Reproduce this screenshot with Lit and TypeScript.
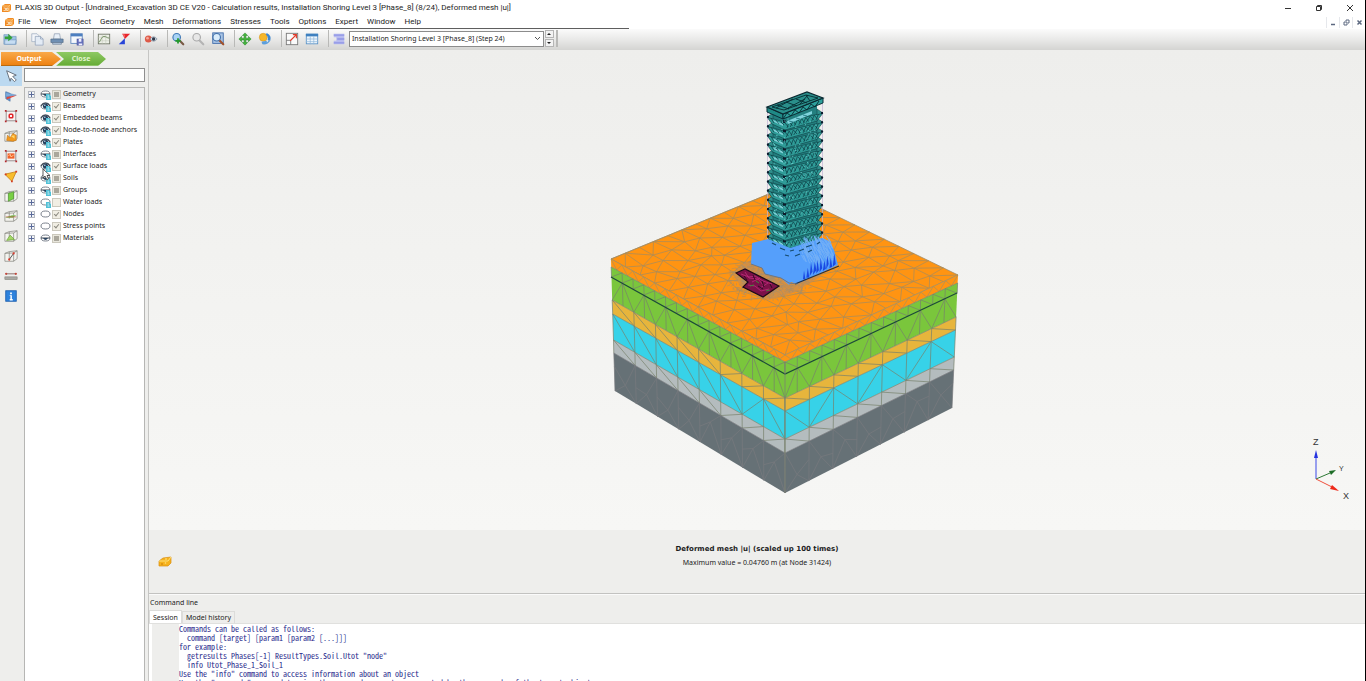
import { LitElement, html, css, svg, TemplateResult } from "lit";
import { customElement, property, state } from "lit/decorators.js";
import { classMap } from "lit/directives/class-map.js";

type Pt = [number, number];

const pts = (list: Pt[]) => list.map((p) => p[0].toFixed(1) + "," + p[1].toFixed(1)).join(" ");
const seg = (a: Pt, b: Pt) => `M${a[0].toFixed(1)} ${a[1].toFixed(1)}L${b[0].toFixed(1)} ${b[1].toFixed(1)}`;
const mix = (a: Pt, b: Pt, t: number): Pt => [a[0] + (b[0] - a[0]) * t, a[1] + (b[1] - a[1]) * t];

function random(seed: number) {
  let s = seed;
  return () => {
    s = (s * 16807) % 2147483647;
    return s / 2147483647;
  };
}

/* ---------- icons ---------- */

const folder = svg`<path d="M1 3h6l1 2h7v9H1z" fill="#9fc3e6" stroke="#6b90b8" stroke-width=".7"/><path d="M2 9h13l-1 5H2z" fill="#c6ddf3" stroke="#6b90b8" stroke-width=".6"/><path d="M2 5h4V2l5 4.500-5 4V8H2z" fill="#35a13c"/>`;
const sheets = svg`<path d="M2 2h6l2 2v7H2z" fill="#f3f6fa" stroke="#9aa9bd" stroke-width=".8"/><path d="M6 5h6l3 3v7H6z" fill="#e3ebf5" stroke="#8b9cb4" stroke-width=".8"/><path d="M12 5v3h3" fill="none" stroke="#8b9cb4" stroke-width=".8"/>`;
const printer = svg`<path d="M4 8l1-6h6l1 6z" fill="#e9f0f8" stroke="#7e8ea5" stroke-width=".7"/><path d="M1 8h14v4H1z" fill="#6f8fb3" stroke="#4e6682" stroke-width=".7"/><path d="M3 12h10v2H3z" fill="#b7c9de" stroke="#4e6682" stroke-width=".6"/>`;
const saveView = svg`<rect x="1" y="2" width="13" height="11" fill="#f5f8fc" stroke="#5f87bd"/><path d="M1 2h13v3H1z" fill="#4d7fc0"/><rect x="8" y="8" width="7" height="7" fill="#6873bd" stroke="#454f96" stroke-width=".6"/><path d="M10 8h3v3h-3zM10 13h4v2h-4z" fill="#eef"/>`;
const curve = svg`<rect x="1.500" y="2.500" width="13" height="11" fill="#eef1e8" stroke="#6f7566"/><path d="M1 6h13M1 10h13M6 3v11M10 3v11" stroke="#b9bfb0" stroke-width=".5"/><path d="M2 12c2-1 3-7 6-7s3 2 6 2" fill="none" stroke="#6f8d5e"/>`;
const crossSection = svg`<path d="M6 2h9L9 8z" fill="#e8262c"/><path d="M9 7v7H2z" fill="#2845d8"/><path d="M6 2l3 1v4z" fill="#f46a6a"/>`;
const hideEye = svg`<circle cx="5" cy="8" r="4" fill="#dd5a48"/><circle cx="4" cy="7" r="1.500" fill="#f6a79a"/><path d="M7 8q4-5 8 0q-4 5-8 0z" fill="#e5edf5" stroke="#64748a" stroke-width=".7"/><circle cx="11" cy="8" r="2" fill="#303b4c"/>`;
const magnify = (lens: string, ring: string, handle: string) =>
  svg`<path d="M9.500 9.500l4.500 4.500" stroke=${handle} stroke-width="2.500" stroke-linecap="round"/><circle cx="6.500" cy="6" r="4.300" fill=${lens} stroke=${ring} stroke-width="1.300"/>`;
const zoomIn = svg`${magnify("#a9d3f5", "#3f78b5", "#7a5a46")}<path d="M5 10h6M8 7v6" stroke="#239a2b" stroke-width="2"/>`;
const zoomOut = magnify("#e7e7e7", "#a9a9a9", "#b4b4b4");
const zoomFit = svg`<rect x="2" y="1" width="12" height="12" fill="#a9c4e5" stroke="#3e6aa8"/>${magnify("#d9ecfb", "#3f6fa9", "#a0522d")}`;
const move = svg`<path d="M8 1l3 3H9v3h3V5l3 3-3 3V9H9v3h2l-3 3-3-3h2V9H4v2L1 8l3-3v2h3V4H5z" fill="#45b53c" stroke="#27872a" stroke-width=".6"/>`;
const rotate = svg`<circle cx="6" cy="6" r="4.500" fill="#f7b729" stroke="#d3921a" stroke-width=".6"/><path d="M10 1q6 3 4 9l-3-1q1-4-2-6z" fill="#3f87cf"/><path d="M14 10q-3 5-9 4l-1-3 6-1v2q2-1 2-3z" fill="#5b9edc"/>`;
const scale = svg`<rect x="1.500" y="1.500" width="13" height="13" fill="#fafafa" stroke="#777"/><path d="M1.500 9.500h5v5" fill="none" stroke="#777"/><path d="M6 10l7-7M9 3h4v4" fill="none" stroke="#e13a2a" stroke-width="1.300"/>`;
const grid = svg`<rect x="1.500" y="2.500" width="13" height="11" fill="#eef6fc" stroke="#5b92c6"/><path d="M1 2h14v3H1z" fill="#3f80c0"/><path d="M1 8h14M1 11h14M6 5v9M10 5v9" stroke="#8fb6da" stroke-width=".8"/>`;
const levels = svg`<path d="M2 2h12v12H2v-4h3V6H2z" fill="#b7bbf0"/><path d="M2 3.500h12M6 8h8M2 12.500h12" stroke="#9095e4" stroke-width="1.500"/>`;

const arrow = svg`<path d="M3 2l11 5-4 1.500 4 4-2 2-4-4L7 14z" fill="#fff" stroke="#5a6470" stroke-width="1"/>`;
const plane = svg`<path d="M2 3l5 2v9l-5-3z" fill="#5f97d3" stroke="#41699a" stroke-width=".6"/><path d="M2 4l12 3-12 2z" fill="#7fadde" stroke="#4f80b8" stroke-width=".5"/><path d="M3 12l12-5-12 2z" fill="#e2473b"/>`;
const frame = svg`<rect x="2.500" y="2.500" width="11" height="11" fill="#f7f3f3" stroke="#8f8484"/><path d="M1 1h2v2H1zM13 1h2v2h-2zM1 13h2v2H1zM13 13h2v2h-2z" fill="#b3282c"/>`;
const nodeFrame = svg`${frame}<rect x="6" y="6" width="4" height="4" rx="1" fill="#fff" stroke="#e0262a" stroke-width="1.800"/>`;
const cubeFrame = (inner: TemplateResult) => svg`<path d="M1 5l5-2 9-1v9l-4 3H1z" fill="#f3f3ef" stroke="#84847c" stroke-width=".8"/><path d="M1 5l10-.5V14M11 4.500l4-2.500M6 3v8" fill="none" stroke="#84847c" stroke-width=".8"/>${inner}`;
const cluster = cubeFrame(svg`<path d="M3 13l1-6 3 3 3-5 4 2v6l-4 1z" fill="#f39a1e" stroke="#b86d12" stroke-width=".6"/><path d="M8 8l4-1v4z" fill="#ffd76a"/>`);
const elementFrame = svg`${frame}<path d="M4 5h8v6H4z" fill="#f0622a"/><path d="M5 8l2-2 1 3 3-2" fill="none" stroke="#ffd3a0"/>`;
const triangle = svg`<path d="M1 6l13-3-5 11z" fill="#f8bd2c" stroke="#c8861c"/><path d="M1 5h2v2H1zM13 2h2v2h-2zM8 13h2v2H8z" fill="#d43a24"/>`;
const greenFace = cubeFrame(svg`<path d="M5 5l6-2v8l-6 3z" fill="#79cf43" stroke="#3f8a22" stroke-width=".7"/>`);
const waterLine = cubeFrame(svg`<path d="M1 10l8-3 5 0-4 3z" fill="#7fc25a"/><path d="M2 9h12" stroke="#b33b2c" stroke-width=".7"/>`);
const wedge = cubeFrame(svg`<path d="M3 13l4-6 5 5z" fill="#a5d867" stroke="#5f9a2b" stroke-width=".7"/>`);
const probe = cubeFrame(svg`<path d="M6 12l5-7" stroke="#444"/><circle cx="6" cy="12" r="1.300" fill="#d93a2c"/><circle cx="11" cy="5" r="1.300" fill="#d93a2c"/>`);
const ruler = svg`<path d="M2 5.500h12" stroke="#83635f"/><circle cx="2.500" cy="5.500" r="1.300" fill="#c2473c"/><circle cx="13.500" cy="5.500" r="1.300" fill="#c2473c"/><rect x="1" y="9" width="14" height="3" fill="#a9a9a4" stroke="#77776f" stroke-width=".6"/>`;
const info = svg`<rect x="2" y="2" width="12" height="12" fill="#2d82dd" stroke="#1c5fae"/><path d="M7 4h2v2H7zM6.500 7H9v4.500h1V13H6.500v-1.500h.8V8h-.8z" fill="#fff"/>`;

const icon = (body: TemplateResult, size = 16) =>
  html`<svg class="icon" width=${size} height=${size} viewBox="0 0 16 16" aria-hidden="true">${body}</svg>`;

const toolbarGroups: [string, TemplateResult][][] = [
  [["Open project", folder]],
  [["Copy", sheets], ["Print", printer], ["Save view", saveView]],
  [["Curves manager", curve], ["Cross section", crossSection]],
  [["Hide items", hideEye]],
  [["Zoom in", zoomIn], ["Zoom out", zoomOut], ["Reset zoom", zoomFit]],
  [["Move", move], ["Rotate", rotate]],
  [["Scale", scale], ["Table", grid]],
  [["Legend", levels]],
];

const sideTools: [string, TemplateResult][] = [
  ["Select", arrow],
  ["Cross section plane", plane],
  ["Select nodes", nodeFrame],
  ["Select clusters", cluster],
  ["Select elements", elementFrame],
  ["Select structures", triangle],
  ["Vertical section", greenFace],
  ["Horizontal section", waterLine],
  ["Polygon section", wedge],
  ["Line section", probe],
  ["Distance", ruler],
  ["Information", info],
];

const menus = ["File", "View", "Project", "Geometry", "Mesh", "Deformations", "Stresses", "Tools", "Options", "Expert", "Window", "Help"];

type Eye = "open" | "half" | "closed";
interface Row { label: string; eye: Eye; page: boolean; check: "on" | "mixed" | "off"; }
const rows: Row[] = [
  { label: "Geometry", eye: "half", page: true, check: "mixed" },
  { label: "Beams", eye: "open", page: true, check: "on" },
  { label: "Embedded beams", eye: "open", page: true, check: "on" },
  { label: "Node-to-node anchors", eye: "open", page: true, check: "on" },
  { label: "Plates", eye: "open", page: true, check: "on" },
  { label: "Interfaces", eye: "half", page: true, check: "mixed" },
  { label: "Surface loads", eye: "open", page: true, check: "on" },
  { label: "Soils", eye: "half", page: true, check: "mixed" },
  { label: "Groups", eye: "half", page: true, check: "mixed" },
  { label: "Water loads", eye: "closed", page: true, check: "off" },
  { label: "Nodes", eye: "closed", page: false, check: "on" },
  { label: "Stress points", eye: "closed", page: false, check: "on" },
  { label: "Materials", eye: "half", page: false, check: "mixed" },
];

/* ---------- soil model ---------- */

const LAYERS = [
  { fill: "#ff9412", left: 259, front: 355, right: 275 },
  { fill: "#7ac63c", left: 267, front: 362, right: 283 },
  { fill: "#e7b53c", left: 300, front: 398, right: 317 },
  { fill: "#37d2e8", left: 314, front: 411, right: 330 },
  { fill: "#b4bcbe", left: 340, front: 439, right: 357 },
  { fill: "#667176", left: 353, front: 453, right: 370 },
  { fill: "", left: 391, front: 493, right: 408 },
];
const leftX = (y: number) => 611 + ((y - 259) / 132) * 4;
const rightX = (y: number) => 958 - ((y - 275) / 133) * 6;

function sideFace(side: "left" | "right") {
  const edge = (i: number, t: number): Pt => {
    const l = LAYERS[i];
    const outer: Pt = side === "left" ? [leftX(l.left), l.left] : [rightX(l.right), l.right];
    return mix(outer, [785, l.front], t);
  };
  const n = side === "left" ? 8 : 7;
  const out: TemplateResult[] = [];
  const rnd = random(side === "left" ? 91 : 57);
  for (let i = 0; i < 6; i++) {
    out.push(svg`<polygon points=${pts([edge(i, 0), edge(i, 1), edge(i + 1, 1), edge(i + 1, 0)])} fill=${LAYERS[i].fill}/>`);
    let d = seg(edge(i, 0), edge(i, 1));
    const cols = i < 2 ? n * 2 : n;
    for (let c = 0; c <= cols; c++) {
      const t = c / cols;
      const u = (c + 1) / cols;
      if (i === 0) {
        if (c < cols) d += seg(edge(0, t), edge(1, (t + u) / 2)) + seg(edge(1, (t + u) / 2), edge(0, u));
      } else if (i === 1) {
        const split = (s: number) => mix(edge(1, s), edge(2, s), 0.3);
        d += seg(edge(1, t), split(t));
        if (c < cols) {
          d += seg(split(t), edge(1, u));
          d += c % 2 ? seg(split(t), edge(2, u)) + seg(split(t), edge(2, t)) : seg(edge(2, t), split(u));
        }
      } else if (i < 5) {
        d += seg(edge(i, t), edge(i + 1, t));
        const rising = side === "right" || c > 4 ? (i === 3 ? c % 2 === 0 : true) : false;
        if (c < cols) d += rising ? seg(edge(i + 1, t), edge(i, u)) : seg(edge(i, t), edge(i + 1, u));
      } else {
        const mid = mix(edge(5, t), edge(6, t), 0.35 + rnd() * 0.3);
        d += seg(edge(5, t), mid) + seg(mid, edge(6, t));
        if (c < cols) {
          const half = (t + u) / 2;
          const centre = mix(edge(5, half), edge(6, half), 0.3 + rnd() * 0.4);
          d += seg(mid, centre) + seg(centre, edge(5, u)) + seg(centre, edge(6, t)) + seg(centre, edge(6, u));
        }
      }
    }
    const stroke = i === 5 ? "#787a7e" : i === 0 ? "#a8905f" : "#77816b";
    out.push(svg`<path d=${d} fill="none" stroke=${stroke} stroke-width=".7"/>`);
  }
  return out;
}

function topFace() {
  const L: Pt = [611, 259], B: Pt = [781, 189], R: Pt = [958, 275], F: Pt = [785, 355];
  const n = 12;
  const rnd = random(4242);
  const grid: Pt[][] = [];
  for (let i = 0; i <= n; i++) {
    grid.push([]);
    for (let j = 0; j <= n; j++) {
      const inner = i > 0 && i < n && j > 0 && j < n;
      const u = (i + (inner ? (rnd() - 0.5) * 0.45 : 0)) / n;
      const v = (j + (inner ? (rnd() - 0.5) * 0.45 + (i % 2 ? 0.22 : -0.22) : 0)) / n;
      grid[i].push(mix(mix(L, B, u), mix(F, R, u), v));
    }
  }
  let d = "";
  for (let i = 0; i < n; i++)
    for (let j = 0; j < n; j++) {
      d += seg(grid[i][j], grid[i + 1][j]) + seg(grid[i][j], grid[i][j + 1]);
      d += i % 2 ? seg(grid[i][j], grid[i + 1][j + 1]) : seg(grid[i + 1][j], grid[i][j + 1]);
    }
  return svg`<polygon points=${pts([L, B, R, F])} fill="#ff9412" stroke="#a08a66" stroke-width=".8"/>
    <path d=${d} fill="none" stroke="#a88c5c" stroke-width=".75"/>`;
}

function refinedZone() {
  const rnd = random(77);
  let d = "";
  for (let k = 0; k < 620; k++) {
    const a = rnd() * Math.PI * 2, r = Math.pow(rnd(), 0.6);
    const x = 772 + Math.cos(a) * r * 44, y = 278 + Math.sin(a) * r * 22 - Math.cos(a) * 2;
    const b = rnd() * 6.28;
    d += seg([x, y], [x + Math.cos(b) * 4, y + Math.sin(b) * 2.500]);
  }
  return svg`<polygon points="745,262 783,262 822,276 793,293 768,300 741,287 733,274" fill="#c98f50" opacity=".75"/>
    <path d=${d} fill="none" stroke="#a08c70" stroke-width=".5"/>`;
}

function tower() {
  const rnd = random(1313);
  const out: TemplateResult[] = [];
  out.push(svg`<path d="M767.500 108V240M822.500 104V240" stroke="#c3b2d6" stroke-width=".7"/>
    <polygon points="772,112 806,97 817,103 817,241 786,253 772,244" fill="#237f7f"/>`);
  for (let f = 14; f >= 0; f--) {
    const y = 117 + f * 9.200;
    out.push(svg`<polygon points=${pts([[767, y], [784, y + 5], [823, y - 4], [817, y + 4], [785, y + 13], [772, y + 7]])} fill="#2f9c98" stroke="#0c3a40" stroke-width=".6"/>
      <polygon points=${pts([[767, y], [773, y - 4], [773, y + 2]])} fill="#2f8f8c" stroke="#0c3a40" stroke-width=".5"/>
      <polygon points=${pts([[823, y - 4], [817, y - 8], [817, y - 2]])} fill="#2f8f8c" stroke="#0c3a40" stroke-width=".5"/>
      <polygon points=${pts([[773, y + 3], [783, y + 7], [783, y + 9], [774, y + 5]])} fill="#7fd0d6"/>`);
    let d = "";
    for (let k = 0; k < 8; k++) {
      const x = 785 + k * 4.200;
      const b = y + 6 - k * 1.100;
      d += seg([x, b], [x + 2 + rnd() * 2, b + 4]) + seg([x + 4, b - 1], [x + rnd() * 2, b + 5]);
    }
    for (let k = 0; k < 3; k++) d += seg([771 + k * 5, y + 1 + k * 2], [774 + k * 5, y + 6 + k]);
    out.push(svg`<path d=${d} stroke="#0a3a40" stroke-width=".7" fill="none"/>
      <path d=${`M821 ${y - 5}h2v2h-2zM767 ${y - 1}h2v2h-2zM783 ${y + 3}h3v3h-3z`} fill="#0b1b2c"/>`);
  }
  let speck = "";
  for (let k = 0; k < 130; k++) {
    const x = 773 + rnd() * 43, y = 118 + rnd() * 126;
    speck += `M${x.toFixed(1)} ${y.toFixed(1)}h1.200v1h-1.200z`;
  }
  out.push(svg`<path d=${speck} fill="#5fc4c1"/>
    <polygon points="767,107 783,114 783,119 767,112" fill="#1f8a86" stroke="#0a2f38"/>
    <polygon points="783,114 823,98 823,103 783,119" fill="#2d9f9b" stroke="#0a2f38"/>
    <polygon points="767,107 807,92 823,98 783,114" fill="#2a8f8b" stroke="#0a2830" stroke-width="1.200"/>
    <path d="M772 107l34-12 12 3-34 12zM777 105l12 4M786 102l11 4M796 99l11 4M776 108l17-9M788 108l17-9M800 104l8-9M806 95l4 6M783 119l4-6 4 3 4-6 4 3 4-6 4 3 4-6 4 3 4-6" fill="none" stroke="#062a30" stroke-width=".9"/>
    <path d="M787 121l25-10v3l-24 10z" fill="#7fd3dc"/>
    <path d="M789 121l4 1M796 118l4 1M803 115l4 1" stroke="#1b6d78" stroke-width=".8"/>`);
  return out;
}

function excavation() {
  const rnd = random(808);
  let light = "", dark = "";
  for (let k = 0; k < 90; k++) {
    const x = 800 + rnd() * 32, y = 235 + rnd() * 22;
    light += seg([x, y], [x + 2 + rnd() * 3, y + 5 + rnd() * 5]);
  }
  for (let k = 0; k < 10; k++) {
    const x = 804 + k * 3.300;
    const base = 279 - k * 1.350;
    dark += `M${x - 1} ${base}l${1 + rnd()} -${8 + rnd() * 7}l1.500 ${8 + rnd() * 3}z`;
  }
  return svg`<polygon points="752,243 768,239 790,248 822,238 829,241 834,250 838,265 797,284 791,282 789,285 781,278 765,274 762,268 751,264" fill="#559ffb"/>
    <path d=${light} stroke="#74b0f6" stroke-width=".9" fill="none"/>
    <path d=${dark} fill="#1a49e2"/>
    <path d="M795 284l44-18" stroke="#26303f" stroke-width="1.300"/>
    <path d="M751 264l11 4 3 6 16 4 8 5 8 1" fill="none" stroke="#6f7680" stroke-width="1"/>
    <path d="M772 243l4 2M780 248l5 2M790 251l4-1M799 251l5-2M806 247l6-2M795 256l5-2M808 252l4-2M817 244l3-2M785 255l4 1" stroke="#164b6e" stroke-width="1.200"/>
    <polygon points="736,273 745,269 779,286 763,297 743,287 748,282" fill="#7c1149" stroke="#1c0a18" stroke-width="1.200"/>
    <path d="M741 274l8 3 6-1 8 5 9 3M748 285l7 1 6 5 8-2M745 272l4 6 9 1 6 7M752 282l8-4M760 288l8-5" fill="none" stroke="#c22c7e" stroke-width=".8"/>
    <path d="M744 276l3 4M753 275l2 5M762 281l2 6M758 286l5 3M770 284l2 4" fill="none" stroke="#1c0a18" stroke-width=".8"/>
    <path d="M750 286l4-1M756 281l3 2M766 291l4-1" stroke="#3f8a3a" stroke-width="1"/>`;
}

@customElement("soil-model")
export class SoilModel extends LitElement {
  static styles = css`
    :host { display: block; min-height: 0; }
    .scene { display: block; width: 100%; height: 100%; }
  `;
  render() {
    return html`<svg class="scene" viewBox="149 50 1216 480" role="img" aria-label="Deformed mesh">
      ${topFace()} ${sideFace("left")} ${sideFace("right")}
      <path d="M611 277L785 374L957 293" fill="none" stroke="#1c4a3a" stroke-width="1.200"/>
      <path d="M785 362V493" stroke="#7c8470" stroke-width=".8"/>
      ${refinedZone()} ${tower()} ${excavation()}
    </svg>`;
  }
}

@customElement("axis-triad")
export class AxisTriad extends LitElement {
  static styles = css`
    :host { display: block; }
    .axes { display: block; font-family: "Liberation Sans", Arial, sans-serif; }
  `;
  render() {
    return html`<svg class="axes" width="50" height="70" viewBox="0 0 50 70" aria-label="Axes">
      <path d="M11 43V18" stroke="#3a48e8"/><path d="M9 22l2-8 2 8z" fill="#2433e0"/>
      <path d="M11 43l14-6" stroke="#2d7a35"/><path d="M24 35l7-1-5 5z" fill="#1d6d27"/>
      <path d="M11 43l18 9" stroke="#f0503c"/><path d="M27 49l7 6-9-2z" fill="#ee2a1a"/>
      <text x="8" y="9" font-size="9" fill="#333">Z</text>
      <text x="34" y="35" font-size="7" fill="#333">Y</text>
      <text x="38" y="63" font-size="9" fill="#333">X</text>
    </svg>`;
  }
}

@customElement("visibility-tree")
export class VisibilityTree extends LitElement {
  static styles = css`
    :host { display: block; background: #fff; }
    .list { list-style: none; margin: 0; padding: 0; }
    .row {
      display: grid; grid-template-columns: 12px 12px 11px 1fr;
      align-items: center; height: 12px; padding-left: 3px;
      font: 7px/12px "Noto Sans", sans-serif; color: #222;
    }
    .row.current { background: #efefef; }
    .expand {
      width: 7px; height: 7px; padding: 0; border: 0; display: block;
      background:
        linear-gradient(#5a6a9a, #5a6a9a) center / 5px 1px no-repeat,
        linear-gradient(#5a6a9a, #5a6a9a) center / 1px 5px no-repeat,
        #f2f4f7;
      outline: 1px solid #b4b8c0; outline-offset: -1px;
    }
    .eye { display: block; }
    .box {
      appearance: none; margin: 0; width: 9px; height: 9px; box-sizing: border-box;
      border: 1px solid #cbc8bd; background: #f1eee4; display: block;
    }
    .box.mixed { background: linear-gradient(#aaa79c, #aaa79c) center / 5px 5px no-repeat, #e9e7dd; }
    .box.on { position: relative; }
    .box.on::after {
      content: ""; position: absolute; left: 2px; top: 0; width: 2px; height: 4px;
      border: solid #8c8a80; border-width: 0 1px 1px 0; transform: rotate(40deg);
    }
    .name { white-space: nowrap; }
  `;
  private eye(row: Row) {
    return html`<svg class="eye" width="12" height="12" viewBox="0 0 12 12" aria-hidden="true">
      <ellipse cx="5.500" cy="6" rx="4.500" ry="3" fill="#fff" stroke="#6c7480" stroke-width=".9"/>
      ${row.eye === "open" ? svg`<path d="M1 6q4.500-6 9 0" fill="none" stroke="#3d4652" stroke-width="1.200"/><circle cx="5.500" cy="6" r="2.600" fill="#27425f"/><circle cx="4.800" cy="5.200" r=".8" fill="#bcd4ea"/>` : ""}
      ${row.eye === "half" ? svg`<path d="M1 6h9" stroke="#3d4652" stroke-width="1"/><path d="M3 6h5q-2.500 4-5 0z" fill="#2b4460"/>` : ""}
      ${row.page ? svg`<path d="M6 6h3l2 2v4H6z" fill="#4fc0d6"/><path d="M7.500 8h1.500M7.500 10h2" stroke="#fff" stroke-width=".8"/>` : ""}
    </svg>`;
  }
  render() {
    return html`<ul class="list">
      ${rows.map((r, i) => html`<li class=${classMap({ row: true, current: i === 0 })}>
        <button class="expand" aria-label="Expand ${r.label}"></button>
        ${this.eye(r)}
        <input class="box ${r.check}" type="checkbox" id="c${i}" .checked=${r.check === "on"} .indeterminate=${r.check === "mixed"}>
        <label class="name" for="c${i}">${r.label}</label>
      </li>`)}
    </ul>`;
  }
}

@customElement("app-root")
export class AppRoot extends LitElement {
  @state() private tool = 0;
  @property() step = "Installation Shoring Level 3 [Phase_8] (Step 24)";

  static styles = css`
    :host {
      display: flex; flex-direction: column; height: 100vh; overflow: hidden;
      box-sizing: border-box; border-right: 1px solid #000;
      background: #eeeeec; color: #1c1c1c;
      font: 7px/12px "Noto Sans", sans-serif;
    }
    button { font: inherit; color: inherit; border: 0; background: none; padding: 0; }
    .icon { display: block; }
    .titlebar {
      display: flex; align-items: center; height: 16px; background: #fff; flex: none;
      padding-left: 1px; gap: 3px; font: 8px/16px Roboto, sans-serif;
    }
    .title { flex: 1; font: inherit; margin: 0; white-space: nowrap; }
    .winctl { display: flex; }
    .winctl button { width: 31px; height: 16px; display: grid; place-items: center; }
    .menubar {
      display: flex; align-items: center; height: 12px; background: #fff; flex: none;
      padding-left: 4px; font: 8px/12px Roboto, sans-serif;
      border-bottom: 1px solid #fff;
    }
    .menus { display: flex; gap: 9px; padding-left: 3px; flex: 1; }
    .mdictl { display: flex; }
    .mdictl button { width: 13px; height: 11px; display: grid; place-items: center; border-left: 1px solid #e6e8ec; }
    .toolbar {
      display: flex; align-items: center; height: 21px; flex: none; position: relative;
      background: linear-gradient(#fbfbfb, #e9e9e8 50%, #d4d4d2);
      padding-bottom: 2px; box-sizing: border-box;
    }
    .rule { position: absolute; left: 0; top: -1px; width: 629px; max-width: 100%; height: 1px; background: #5e5e5e; }
    .group { display: flex; }
    .group button { width: 20px; height: 19px; display: grid; place-items: center; }
    .group.sep { padding-left: 6px; }
    .group.sep::before, .end {
      content: ""; width: 1px; height: 17px; background: #b9b9b7; align-self: center;
    }
    .group .icon { width: 14px; height: 14px; }
    .combo {
      appearance: none; width: 195px; height: 16px; box-sizing: border-box; border: 1px solid #8c8c8c; border-radius: 0;
      font: 7px/14px "Noto Sans", sans-serif; color: #1c1c1c; padding: 0 12px 0 2px; margin: 0;
      background: url("data:image/svg+xml,%3Csvg xmlns='http://www.w3.org/2000/svg' width='7' height='5'%3E%3Cpath d='M1 1l2.500 2.500L6 1' fill='none' stroke='%23555'/%3E%3C/svg%3E") right 2px center no-repeat #fff;
    }
    .spin { display: flex; flex-direction: column; gap: 1px; margin: 0 2px 0 1px; }
    .spin button { width: 9px; height: 8px; background: #f3f3f3; outline: 1px solid #b5b5b5; outline-offset: -1px; display: grid; place-items: center; }
    .end { width: 2px; }
    .body { display: flex; flex: 1; min-height: 0; }
    .left { width: 148px; flex: none; display: flex; flex-direction: column; }
    .steps { display: flex; padding: 2px 0 0 1px; height: 16px; box-sizing: border-box; }
    .step {
      height: 14px; font: bold 7px/14px "Noto Sans", sans-serif; color: #fff; text-align: center;
      border-bottom: 1px solid #b96b12; box-sizing: border-box;
    }
    .output { width: 60px; background: linear-gradient(#f9a94a, #ee8212); clip-path: polygon(0 0, 51px 0, 100% 50%, 51px 100%, 0 100%); padding-right: 4px; z-index: 1; }
    .close { width: 50px; margin-left: -5px; color: #e3f4d2; background: linear-gradient(#8ec963, #68ad38); clip-path: polygon(0 0, 42px 0, 100% 50%, 42px 100%, 0 100%, 8px 50%); border-color: #8fc46a; }
    .panels { display: flex; flex: 1; min-height: 0; }
    .tools { width: 24px; flex: none; display: flex; flex-direction: column; }
    .tools button { width: 22px; height: 20px; display: grid; place-items: center; }
    .tools button.active { background: #bcd9f0; }
    .tools .icon { width: 14px; height: 14px; }
    .explorer { flex: 1; display: flex; flex-direction: column; gap: 5px; padding-top: 2px; position: relative; }
    .search { height: 14px; width: 121px; box-sizing: border-box; border: 1px solid #8f8f8f; background: #fff; padding: 0 3px; margin: 0; font: inherit; }
    .tree { flex: 1; width: 121px; box-sizing: border-box; border: solid #b6b6b4; border-width: 1px 1px 0; }
    .cursor { position: absolute; left: 18px; top: 102px; }
    .main { flex: 1; min-width: 0; display: flex; flex-direction: column; border-left: 1px solid #c6c6c4; box-sizing: border-box; }
    .view { flex: 1; min-height: 0; position: relative; background: linear-gradient(#eeeeec, #f1f1ef 30%, #f7f7f5); }
    .model { height: 100%; }
    .triad { position: absolute; right: 10px; bottom: 24px; }
    .caption { height: 64px; flex: none; box-sizing: border-box; border-bottom: 1px solid #c2c2c0; display: grid; grid-template-columns: 1fr auto 1fr; align-items: center; }
    .cheese { padding-left: 9px; }
    .legend { text-align: center; line-height: 14px; padding-bottom: 12px; }
    .legend p { margin: 0; }
    .legend .head { font: bold 7px/14px "DejaVu Sans", sans-serif; }
    .command { height: 87px; flex: none; display: flex; flex-direction: column; border-top: 1px solid #fafafa; box-sizing: border-box; }
    .command h2 { margin: 0; padding: 1px 0 0 1px; font: 7px/14px "Noto Sans", sans-serif; }
    .tabs { display: flex; align-items: flex-end; height: 13px; }
    .tab { height: 12px; padding: 0 3px; line-height: 11px; border: 1px solid #dcdcda; border-bottom: 0; }
    .tab.active { height: 13px; background: #fff; }
    .session { flex: 1; display: flex; background: #fff; border-top: 1px solid #e0e0de; padding-left: 3px; overflow: hidden; }
    .gutter { width: 27px; flex: none; background: #eeeeec; }
    .log { margin: 0; font: 8px/9px "Noto Sans Mono CJK SC", "Noto Sans Mono CJK JP", "DejaVu Sans Mono", monospace; color: #2a2a8c; }
  `;

  private cubeIcon() {
    return html`<svg class="icon" width="11" height="10" viewBox="0 0 11 10" aria-hidden="true">
      <path d="M1 3l3-2h6v6L8 9H1z" fill="#f08a24"/><path d="M1 3h7v6M8 3l2-2" stroke="#ffd38a" fill="none" stroke-width=".8"/><path d="M2.500 5h2v2.500h-2M5.500 5h1.500v2.500H5.500z" stroke="#fff3da" fill="none" stroke-width=".7"/></svg>`;
  }

  render() {
    return html`
      <header class="titlebar">
        ${this.cubeIcon()}
        <h1 class="title">PLAXIS 3D Output - [Undrained_Excavation 3D CE V20 - Calculation results, Installation Shoring Level 3 [Phase_8] (8/24), Deformed mesh |u|]</h1>
        <div class="winctl">
          <button aria-label="Minimize"><svg width="8" height="8"><path d="M1 4.500h6" stroke="#333"/></svg></button>
          <button aria-label="Restore"><svg width="8" height="8"><path d="M1.500 2.500h4v4h-4zM2.500 2V1.500h4v4H6" fill="none" stroke="#333"/></svg></button>
          <button aria-label="Close window"><svg width="8" height="8"><path d="M1 1l6 6M7 1L1 7" stroke="#333"/></svg></button>
        </div>
      </header>
      <nav class="menubar">
        ${this.cubeIcon()}
        <div class="menus">${menus.map((m) => html`<button>${m}</button>`)}</div>
        <div class="mdictl">
          <button aria-label="Minimize view"><svg width="7" height="7"><path d="M1 5.500h4" stroke="#5c6880" stroke-width="1.500"/></svg></button>
          <button aria-label="Restore view"><svg width="7" height="7"><path d="M1 3h3v3H1zM3 2V1h3v3H5" fill="none" stroke="#5c6880"/></svg></button>
          <button aria-label="Close view"><svg width="7" height="7"><path d="M1.500 1.500l4 4M5.500 1.500l-4 4" stroke="#5c6880" stroke-width="1.500"/></svg></button>
        </div>
      </nav>
      <div class="toolbar">
        <span class="rule"></span>
        ${toolbarGroups.map((g, i) => html`<div class=${classMap({ group: true, sep: i > 0 })}>
          ${g.map(([name, body]) => html`<button title=${name} aria-label=${name}>${icon(body)}</button>`)}
        </div>`)}
        <select class="combo" aria-label="Calculation step"><option>${this.step}</option></select>
        <div class="spin">
          <button aria-label="Next step"><svg width="5" height="4"><path d="M0 3h4L2 1z" fill="#222"/></svg></button>
          <button aria-label="Previous step"><svg width="5" height="4"><path d="M0 1h4L2 3z" fill="#222"/></svg></button>
        </div>
        <span class="end"></span>
      </div>
      <div class="body">
        <aside class="left">
          <div class="steps">
            <button class="step output">Output</button>
            <button class="step close">Close</button>
          </div>
          <div class="panels">
            <div class="tools">
              ${sideTools.map(([name, body], i) => html`<button class=${classMap({ active: i === this.tool })} title=${name} aria-label=${name} @click=${() => (this.tool = i)}>${icon(body)}</button>`)}
            </div>
            <div class="explorer">
              <input class="search" type="text" aria-label="Filter">
              <visibility-tree class="tree"></visibility-tree>
              <svg class="cursor" width="9" height="13" viewBox="0 0 9 13" aria-hidden="true"><path d="M1 1v9l2-2 2 4 1.500-1L5 7.500h3z" fill="#fff" stroke="#333" stroke-width=".8"/></svg>
            </div>
          </div>
        </aside>
        <main class="main">
          <section class="view">
            <soil-model class="model"></soil-model>
            <axis-triad class="triad"></axis-triad>
          </section>
          <section class="caption">
            <div class="cheese"><svg class="icon" width="14" height="12" viewBox="0 0 14 12" aria-hidden="true"><path d="M1 5l4-3 8-1v6l-3 3H1z" fill="#f6b21d" stroke="#d98e12" stroke-width=".7"/><path d="M1 5h9l3-4" fill="none" stroke="#ffe17a"/><circle cx="4" cy="8" r="1" fill="#d98e12"/><circle cx="7.500" cy="7" r=".8" fill="#ffe17a"/><circle cx="8" cy="3" r=".8" fill="#ffe893"/></svg></div>
            <div class="legend">
              <p class="head">Deformed mesh |u| (scaled up 100 times)</p>
              <p>Maximum value = 0.04760 m (at Node 31424)</p>
            </div>
          </section>
          <section class="command">
            <h2>Command line</h2>
            <div class="tabs"><button class="tab active">Session</button><button class="tab">Model history</button></div>
            <div class="session">
              <div class="gutter"></div>
              <pre class="log">${[
                "Commands can be called as follows:",
                "  command [target] [param1 [param2 [...]]]",
                "for example:",
                "  getresults Phases[-1] ResultTypes.Soil.Utot \"node\"",
                "  info Utot_Phase_1_Soil_1",
                "Use the \"info\" command to access information about an object",
                "Use the \"commands\" command to view the command parameters expected by the commands of the target object",
              ].join("\n")}</pre>
            </div>
          </section>
        </main>
      </div>`;
  }
}
